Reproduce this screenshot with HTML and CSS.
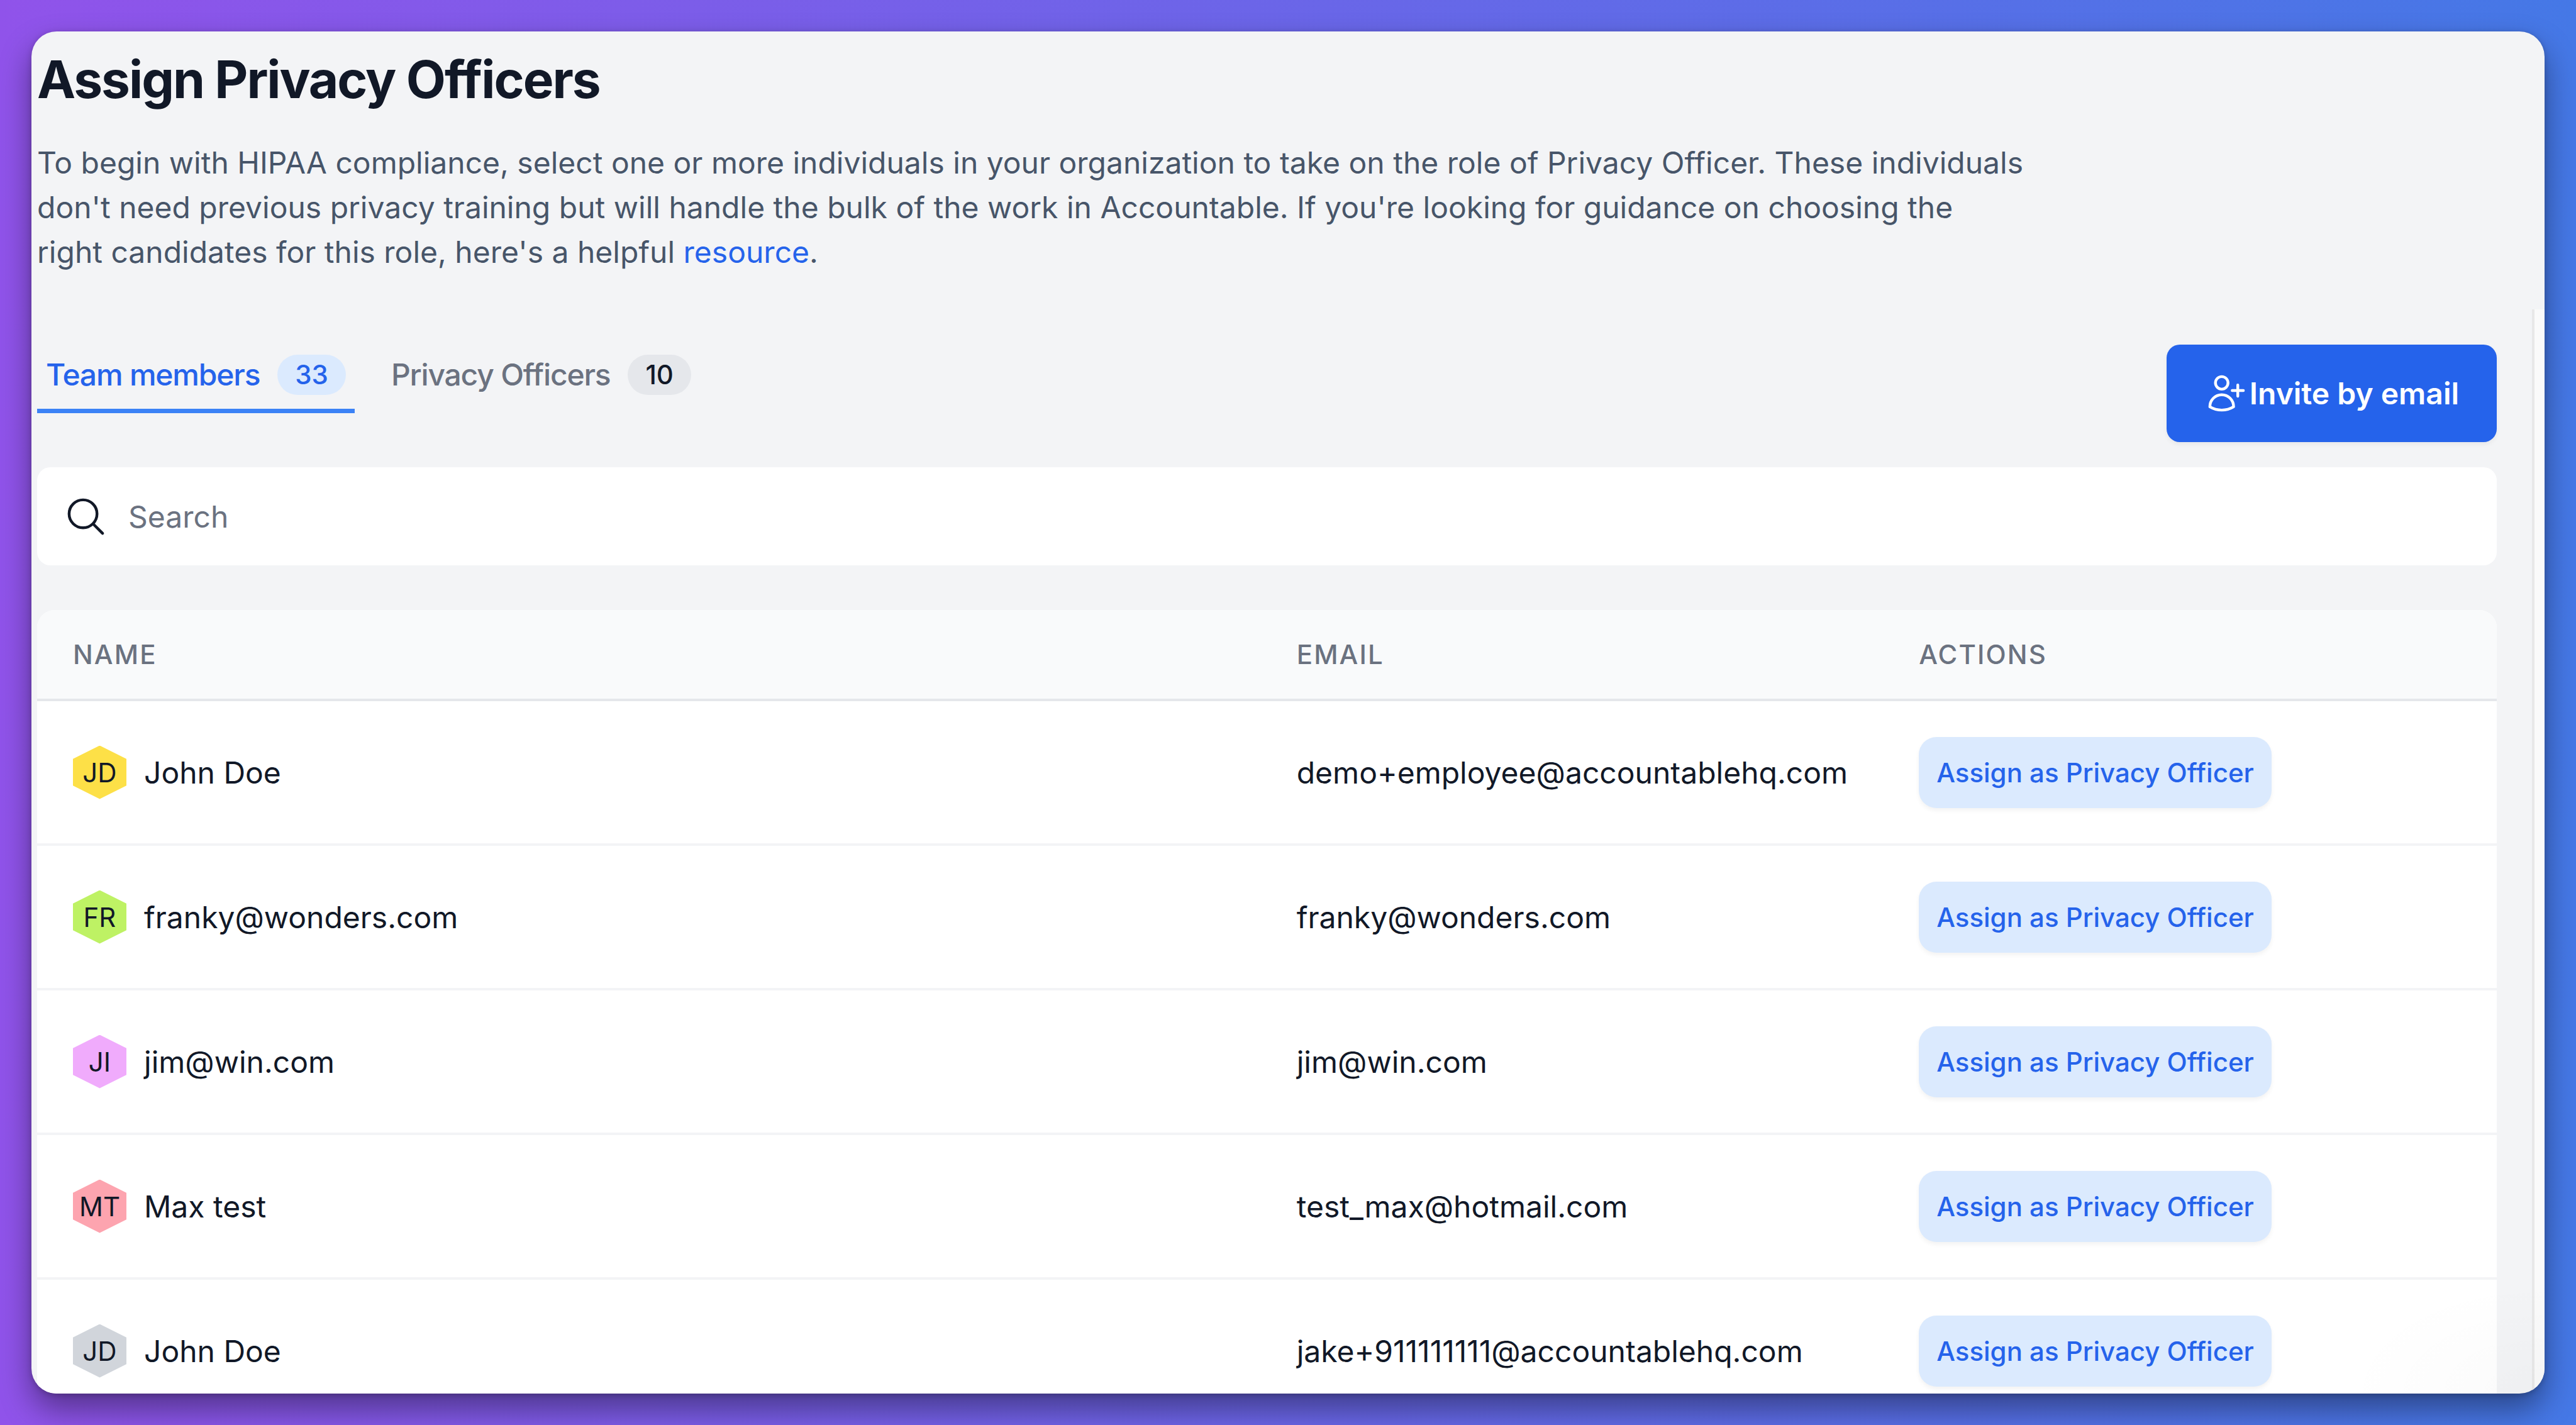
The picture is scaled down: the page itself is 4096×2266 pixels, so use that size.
FILE: index.html
```html
<!DOCTYPE html>
<html lang="en">
<head>
  <meta charset="UTF-8">
  <title>Assign Privacy Officers</title>
  <meta name="viewport" content="width=device-width, initial-scale=1.0">
  <link rel="stylesheet" href="styles.css">
</head>
<body>
  <div class="window">
    <main class="content">
      <h1>Assign Privacy Officers</h1>
      <p class="intro">To begin with HIPAA compliance, select one or more individuals in your organization to take on the role of Privacy Officer. These individuals don't need previous privacy training but will handle the bulk of the work in Accountable. If you're looking for guidance on choosing the right&nbsp;candidates for this role, here's a helpful <a href="#">resource</a>.</p>

      <div class="toolbar">
        <nav class="tabs">
          <a href="#" class="tab active">Team members <span class="count">33</span></a>
          <a href="#" class="tab">Privacy Officers <span class="count">10</span></a>
        </nav>
        <button class="invite" type="button">
          <svg class="icon" viewBox="0 0 24 24" aria-hidden="true">
            <path d="M19 7.5v3m0 0v3m0-3h3m-3 0h-3m-2.25-4.125a3.375 3.375 0 1 1-6.75 0 3.375 3.375 0 0 1 6.75 0zM4 19.235v-.11a6.375 6.375 0 0 1 12.75 0v.109A12.318 12.318 0 0 1 10.374 21c-2.331 0-4.512-.645-6.374-1.766z"/>
          </svg>
          Invite by email
        </button>
      </div>

      <label class="search">
        <svg class="icon" viewBox="0 0 24 24" aria-hidden="true">
          <path d="M21 21l-5.197-5.197m0 0A7.5 7.5 0 1 0 5.196 5.196a7.5 7.5 0 0 0 10.607 10.607z"/>
        </svg>
        <input type="search" placeholder="Search" aria-label="Search">
      </label>

      <table class="members">
        <thead>
          <tr>
            <th class="col-name">Name</th>
            <th class="col-email">Email</th>
            <th>Actions</th>
          </tr>
        </thead>
        <tbody>
          <tr>
            <td><div class="person"><span class="avatar yellow">JD</span>John Doe</div></td>
            <td>demo+employee@accountablehq.com</td>
            <td><button class="assign" type="button">Assign as Privacy Officer</button></td>
          </tr>
          <tr>
            <td><div class="person"><span class="avatar lime">FR</span>franky@wonders.com</div></td>
            <td>franky@wonders.com</td>
            <td><button class="assign" type="button">Assign as Privacy Officer</button></td>
          </tr>
          <tr>
            <td><div class="person"><span class="avatar pink">JI</span>jim@win.com</div></td>
            <td>jim@win.com</td>
            <td><button class="assign" type="button">Assign as Privacy Officer</button></td>
          </tr>
          <tr>
            <td><div class="person"><span class="avatar rose">MT</span>Max test</div></td>
            <td>test_max@hotmail.com</td>
            <td><button class="assign" type="button">Assign as Privacy Officer</button></td>
          </tr>
          <tr>
            <td><div class="person"><span class="avatar gray">JD</span>John Doe</div></td>
            <td>jake+911111111@accountablehq.com</td>
            <td><button class="assign" type="button">Assign as Privacy Officer</button></td>
          </tr>
        </tbody>
      </table>
    </main>
    <div class="scroll-track"></div>
  </div>
</body>
</html>
```

FILE: styles.css
```css
* { box-sizing: border-box; }
body {
  margin: 0; height: 100vh; padding: 50px; overflow: hidden;
  font-family: Inter, 'Liberation Sans', sans-serif; font-size: 48px; line-height: 71px; color: #111827;
  background: linear-gradient(to right, #9053ea, #4578e6);
}
button, input { font: inherit; }
a { color: #2563eb; text-decoration: none; }

.window {
  position: relative; height: 100%; overflow: hidden;
  background: #f3f4f6; border-radius: 40px;
  box-shadow: 0 25px 50px rgba(0,0,0,0.4), 0 2px 10px rgba(0,0,0,0.2);
}
/* soft shade in the bottom right corner */
.window::after {
  content: ''; position: absolute; right: 0; bottom: 0; width: 320px; height: 180px; pointer-events: none;
  background: radial-gradient(farthest-side at bottom right, rgba(0,0,0,0.02), transparent);
}
.content { padding: 28px 76px 0 9px; }
h1 { margin: 0; font-size: 82px; line-height: 98px; font-weight: 700; letter-spacing: -0.025em; }
.intro { margin: 47px 0 0; max-width: 3200px; color: #475569; }

/* tabs and invite button */
.toolbar { display: flex; justify-content: space-between; margin-top: 112px; }
.tabs { display: flex; align-items: flex-start; gap: 44px; }
.tab {
  display: flex; align-items: center; gap: 28px;
  padding: 12px 14px 19px; border-bottom: 7px solid transparent;
  font-weight: 500; letter-spacing: -0.025em; color: #6b7280;
}
.tab.active { color: #2563eb; border-color: #3b82f6; }
.count {
  padding: 4px 28px; border-radius: 32px; background: #e5e7eb;
  font-size: 42px; line-height: 56px; letter-spacing: 0; color: #111827;
}
.tab.active .count { background: #dbeafe; color: #2563eb; }
.icon { width: 71px; height: 71px; flex-shrink: 0; fill: none; stroke: currentColor; stroke-width: 1.5; stroke-linecap: round; stroke-linejoin: round; }
.invite {
  display: flex; align-items: center; gap: 4px; padding: 42px 60px 42px 57px;
  border: none; border-radius: 21px; background: #2563eb; color: #fff; font-weight: 600;
  box-shadow: 0 4px 7px rgba(0,0,0,0.05);
}

.search {
  display: flex; align-items: center; gap: 32px; height: 156px; margin-top: 40px; padding: 0 42px;
  background: #fff; border-radius: 21px;
}
.search input { flex: 1; padding: 0; border: none; outline: none; background: none; color: #111827; }
.search input::placeholder { color: #6b7280; opacity: 1; }

/* members table */
.members { width: 100%; margin-top: 71px; border-spacing: 0; table-layout: fixed; background: #fff; border-radius: 28px 28px 0 0; overflow: hidden; }
.members th {
  height: 145px; padding: 0 57px; text-align: left; background: #f9fafb; border-bottom: 4px solid #e5e7eb;
  font-size: 42px; font-weight: 500; letter-spacing: 0.05em; text-transform: uppercase; color: #6b7280;
}
.col-name { width: 49.75%; }
.col-email { width: 25.3%; }
.members td { height: 230px; padding: 0 57px; border-bottom: 4px solid #f3f4f6; }
.person { display: flex; align-items: center; gap: 28px; }
.avatar {
  width: 85px; height: 85px; line-height: 85px; text-align: center; font-size: 42px;
  clip-path: polygon(50% 0, 100% 25%, 100% 75%, 50% 100%, 0 75%, 0 25%);
}
.yellow { background: #fde047; }
.lime { background: #bef264; }
.pink { background: #f0abfc; }
.rose { background: #fda4af; }
.gray { background: #d1d5db; }
.assign {
  display: block; padding: 28px; border: none; border-radius: 28px; background: #dbeafe; color: #2563eb;
  font-size: 42px; line-height: 57px; font-weight: 500; white-space: nowrap;
  box-shadow: 0 4px 7px rgba(0,0,0,0.05);
}

.scroll-track {
  position: absolute; top: 442px; right: 0; bottom: 0; width: 20px;
  background: #fafafa; border-left: 4px solid #e8e8e8;
}
```
